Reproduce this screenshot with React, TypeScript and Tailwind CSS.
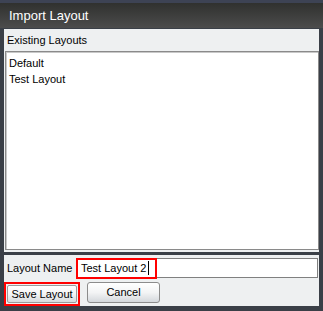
const layouts = ["Default", "Test Layout"];

export default function App() {
  return (
    <div className="w-[323px] h-[311px] bg-[#3a3f47] flex flex-col font-['Liberation_Sans',Arial,sans-serif] text-[11px] text-black">
      {/* Title bar */}
      <div className="h-[28px] border-t-[3px] border-[#3d4354] bg-linear-to-b from-[#30312f] to-[#4c4c4c] flex items-center pl-[9px] pb-[1px]">
        <span className="text-[13px] text-white leading-none">Import Layout</span>
      </div>

      <div className="flex-1 flex flex-col pl-[4px] pr-[4px] pt-[1px] pb-[5px] gap-[3px]">
        {/* Existing layouts panel */}
        <div className="bg-[#eef0f1] flex flex-col h-[223px]">
          <div className="h-[22px] flex items-center pl-[3px]">Existing Layouts</div>
          <div className="ml-[1px] flex-1 mb-[2px] border border-[#8a8a8a] bg-white shadow-[inset_1px_1px_0_#c8c8c8] pt-[3px] pl-[3px]">
            {layouts.map((l) => (
              <div key={l} className="h-[16px] leading-[16px]">
                {l}
              </div>
            ))}
          </div>
        </div>

        {/* Save panel */}
        <div className="bg-[#eef0f1] flex-1 flex flex-col pt-[3px] pl-[3px] pr-[1px] gap-[4px]">
          <div className="flex items-center h-[20px]">
            <span className="w-[69px] pl-[0px]">Layout Name</span>
            <div className="relative flex-1 h-[20px] border border-[#808080] bg-white flex items-center pl-[4px]">
              <span>Test Layout 2</span>
              <span className="w-[1px] h-[14px] bg-black ml-[2px]" />
              <div className="absolute left-[-1px] top-[-1px] w-[81px] h-[21px] border-2 border-[#ff0000]" />
            </div>
          </div>
          <div className="flex items-start gap-[7px] pl-[-3px] -ml-[3px]">
            <div className="border-2 border-[#ff0000] w-[76px] h-[24px] p-[1px]">
              <button className="w-full h-full rounded-[2px] border border-[#9a9a9a] bg-linear-to-b from-white via-[#f3f4f5] to-[#d6dadd] flex items-center justify-center text-[11px]">
                Save Layout
              </button>
            </div>
            <button className="w-[73px] h-[21px] rounded-[3px] border border-[#8c8c8c] bg-linear-to-b from-white via-[#f3f4f5] to-[#d4d8dc] flex items-center justify-center text-[11px]">
              Cancel
            </button>
          </div>
        </div>
      </div>
    </div>
  );
}
